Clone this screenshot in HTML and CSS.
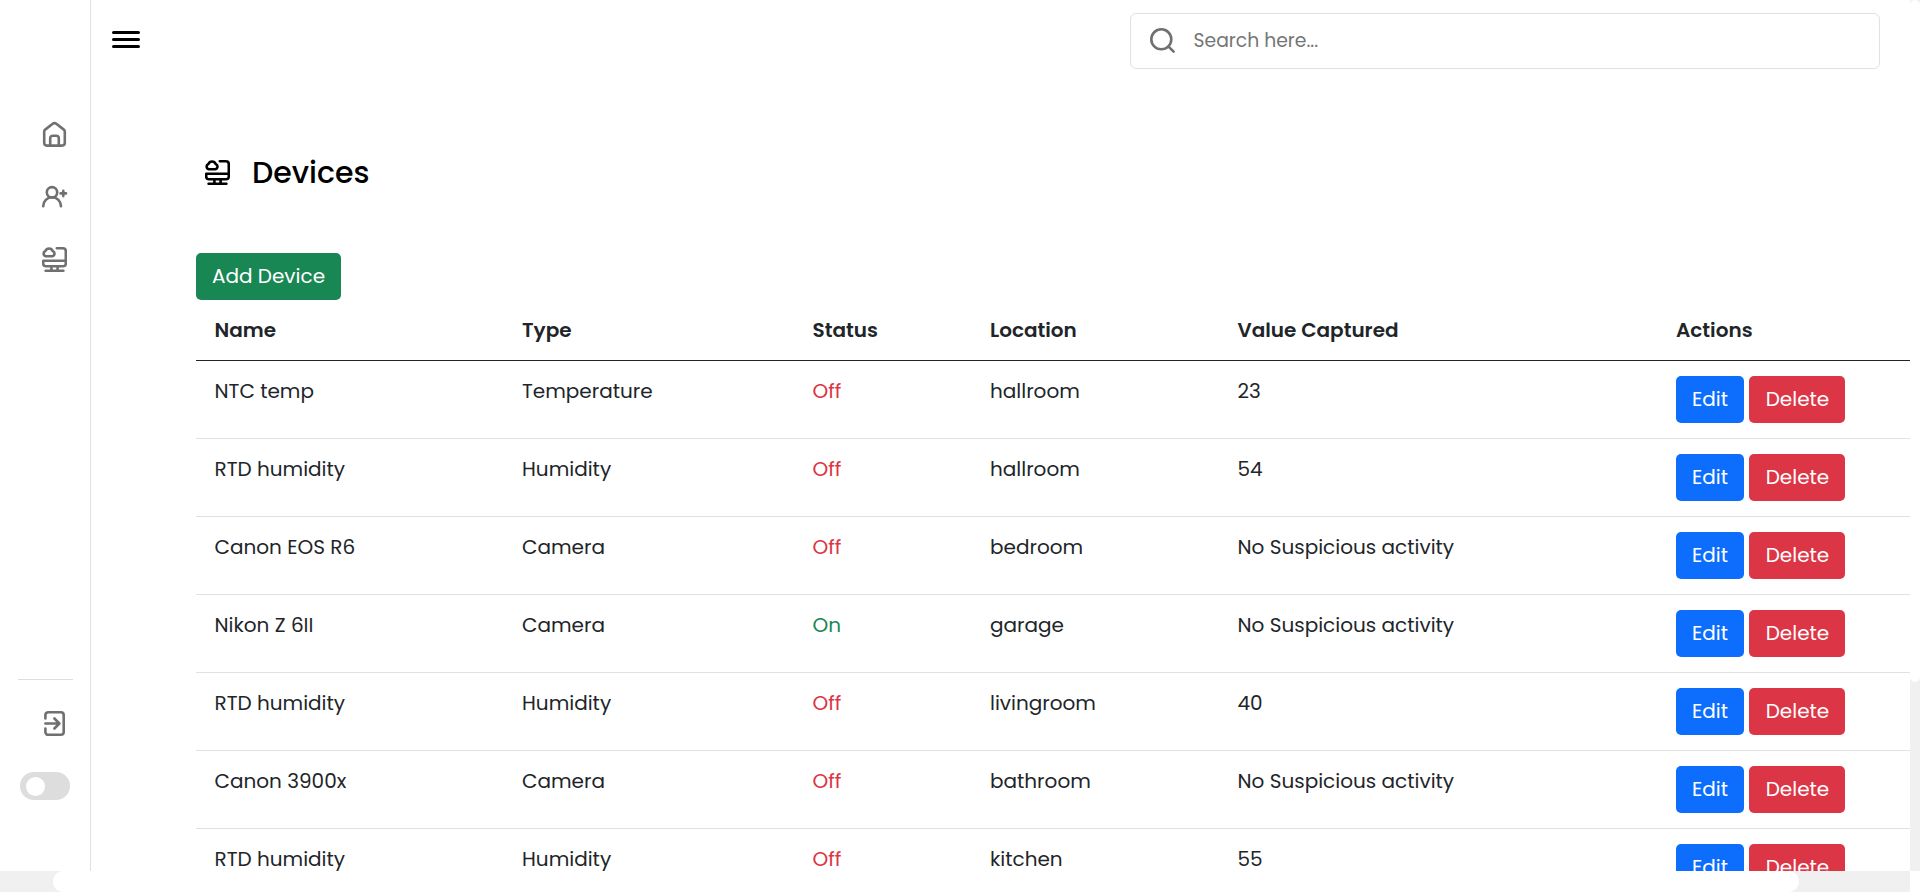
FILE: index.html
```
<!DOCTYPE html>
<html lang="en">
<head>
<meta charset="utf-8">
<title>Devices</title>
<link rel="stylesheet" href="styles.css">
</head>
<body>
<svg class="defs" width="0" height="0">
  <symbol id="monitor" viewBox="0 0 25 25">
    <path d="M14.800 1.300H21a2.800 2.800 0 0 1 2.800 2.800v12.300a2.800 2.800 0 0 1-2.800 2.800H4a2.800 2.800 0 0 1-2.800-2.800v-2.600h22.600M9.400 19.200v4.500m6.200-4.500v4.500M3.600 23.700h17.800M3.800 9.200a2.700 2.700 0 0 1-.4-5.200 3.900 3.900 0 0 1 7.300 0 2.700 2.700 0 0 1-.4 5.200z"/>
  </symbol>
</svg>
<div class="app">
  <div class="page">
    <nav class="sidebar">
      <div class="links">
        <a class="link"><svg class="icon" viewBox="0 0 25 25"><path d="M2.200 9.600v11.200a2.800 2.800 0 0 0 2.800 2.800h15a2.800 2.800 0 0 0 2.800-2.800V9.600a2.800 2.800 0 0 0-1-2L14.300 1.800a2.800 2.800 0 0 0-3.600 0L3.200 7.600a2.800 2.800 0 0 0-1 2zM8.200 23.600v-7.300a2.600 2.600 0 0 1 2.600-2.600h3.400a2.600 2.600 0 0 1 2.600 2.600v7.300"/></svg></a>
        <a class="link"><svg class="icon" viewBox="0 0 25 25"><circle cx="10" cy="8.300" r="5.200"/><path d="M1.200 22.200a8.900 8.900 0 0 1 17.800 0M21.300 6.700v5.400m-2.700-2.700H24"/></svg></a>
        <a class="link"><svg class="icon"><use href="#monitor"/></svg></a>
      </div>
      <div class="bottom">
        <a class="link"><svg class="icon" viewBox="0 0 25 25"><path d="M3.400 7.500V4a2.800 2.800 0 0 1 2.800-2.800h12.700A2.800 2.800 0 0 1 21.700 4v17a2.800 2.800 0 0 1-2.800 2.800H6.200A2.800 2.800 0 0 1 3.400 21v-3.500M3.400 12.500H17m-4.600-5 5 5-5 5"/></svg></a>
        <div class="switch"></div>
      </div>
    </nav>
    <main class="main">
      <header class="top">
        <svg class="menu" viewBox="0 0 28 18"><path d="M1.500 1.500h25M1.500 8.500h25M1.500 15.500h25"/></svg>
        <div class="search">
          <svg class="icon" viewBox="0 0 25 25"><circle cx="11.300" cy="11.300" r="10"/><path d="m18.600 18.600 5 5"/></svg>
          <span>Search here...</span>
        </div>
      </header>
      <section class="content">
        <h1 class="title"><svg class="icon"><use href="#monitor"/></svg><span>Devices</span></h1>
        <button class="btn add">Add Device</button>
        <table class="table">
          <colgroup><col class="c1"><col class="c2"><col class="c3"><col class="c4"><col class="c5"><col></colgroup>
          <thead><tr><th>Name</th><th>Type</th><th>Status</th><th>Location</th><th>Value Captured</th><th>Actions</th></tr></thead>
          <tbody>
            <tr><td>NTC temp</td><td>Temperature</td><td class="off">Off</td><td>hallroom</td><td>23</td><td class="act"><button class="btn edit">Edit</button><button class="btn del">Delete</button></td></tr>
            <tr><td>RTD humidity</td><td>Humidity</td><td class="off">Off</td><td>hallroom</td><td>54</td><td class="act"><button class="btn edit">Edit</button><button class="btn del">Delete</button></td></tr>
            <tr><td>Canon EOS R6</td><td>Camera</td><td class="off">Off</td><td>bedroom</td><td>No Suspicious activity</td><td class="act"><button class="btn edit">Edit</button><button class="btn del">Delete</button></td></tr>
            <tr><td>Nikon Z 6II</td><td>Camera</td><td class="on">On</td><td>garage</td><td>No Suspicious activity</td><td class="act"><button class="btn edit">Edit</button><button class="btn del">Delete</button></td></tr>
            <tr><td>RTD humidity</td><td>Humidity</td><td class="off">Off</td><td>livingroom</td><td>40</td><td class="act"><button class="btn edit">Edit</button><button class="btn del">Delete</button></td></tr>
            <tr><td>Canon 3900x</td><td>Camera</td><td class="off">Off</td><td>bathroom</td><td>No Suspicious activity</td><td class="act"><button class="btn edit">Edit</button><button class="btn del">Delete</button></td></tr>
            <tr><td>RTD humidity</td><td>Humidity</td><td class="off">Off</td><td>kitchen</td><td>55</td><td class="act"><button class="btn edit">Edit</button><button class="btn del">Delete</button></td></tr>
          </tbody>
        </table>
      </section>
    </main>
  </div>
  <div class="vbar"><div class="vthumb"></div></div>
  <div class="hbar"><div class="hthumb"></div></div>
</div>
</body>
</html>
```
FILE: styles.css
```
* { box-sizing: border-box; }
body { margin: 0; background: #fff; color: #212529; font: 400 20px/30px Poppins, Inter, sans-serif; overflow: hidden; }
.defs { display: block; width: 0; height: 0; }
.app { display: grid; grid-template-columns: 1910px 10px; grid-template-rows: 871px 21px; height: 892px; }
.page { display: flex; overflow: hidden; }
.vbar, .hbar { background: #f0f0f0; }
.vthumb { height: 682px; background: #fff; border-radius: 5px; }
.hthumb { width: 1746px; height: 21px; margin-left: 53px; background: #fff; border-radius: 10px; }
.icon { display: block; width: 25px; height: 25px; flex: none; }
svg { fill: none; stroke: #707070; stroke-width: 2.6; stroke-linecap: round; stroke-linejoin: round; overflow: visible; }
.sidebar { width: 91px; flex: none; border-right: 1px solid #dee2e6; display: flex; flex-direction: column; justify-content: space-between; padding: 103px 17px 0 18px; }
.link { display: flex; align-items: center; height: 62.5px; padding-left: 24px; }
.bottom { border-top: 1px solid #dedede; height: 192px; padding-top: 12px; }
.switch { width: 50px; height: 28px; margin: 17px 0 0 2px; border-radius: 14px; background: #ddd; padding: 5px 6px; }
.switch::before { content: ""; display: block; width: 19px; height: 19px; border-radius: 50%; background: #fff; }
.main { flex: 1; min-width: 0; }
.top { display: flex; justify-content: space-between; padding: 13px 30px 0 20.500px; }
.menu { width: 28px; height: 18px; margin-top: 18px; stroke: #000; stroke-width: 3; }
.search { width: 750px; height: 56px; border: 1px solid #dee2e6; border-radius: 6px; display: flex; align-items: center; gap: 18.500px; padding: 0 19px 1px; color: #757575; font-size: 18.750px; }
.content { padding: 81px 0 0 105px; }
.title { display: flex; align-items: center; gap: 22px; height: 45px; margin: 0 0 58px 9px; color: #000; font-size: 30px; font-weight: 500; line-height: 45px; }
.title .icon { stroke: #000; }
.btn { display: inline-block; height: 47px; padding: 0 0 2px; border: 0; border-radius: 5px; color: #fff; font: inherit; text-align: center; }
.add { display: block; width: 145px; background: #198754; }
.edit { width: 68px; margin-right: 5px; background: #0d6efd; }
.del { width: 96px; padding-left: 1px; background: #dc3545; }
.table { width: 1714px; table-layout: fixed; border-collapse: separate; border-spacing: 0; }
.c1 { width: 307.500px; } .c2 { width: 290.500px; } .c3 { width: 177.500px; } .c4 { width: 247.500px; } .c5 { width: 438.500px; }
th, td { padding: 15px 18.500px; text-align: left; vertical-align: top; border-bottom: 1px solid #dee2e6; white-space: nowrap; }
th { font-weight: 600; border-color: #212529; }
td { height: 78px; }
.act { display: flex; }
.off { color: #dc3545; }
.on { color: #198754; }
```
